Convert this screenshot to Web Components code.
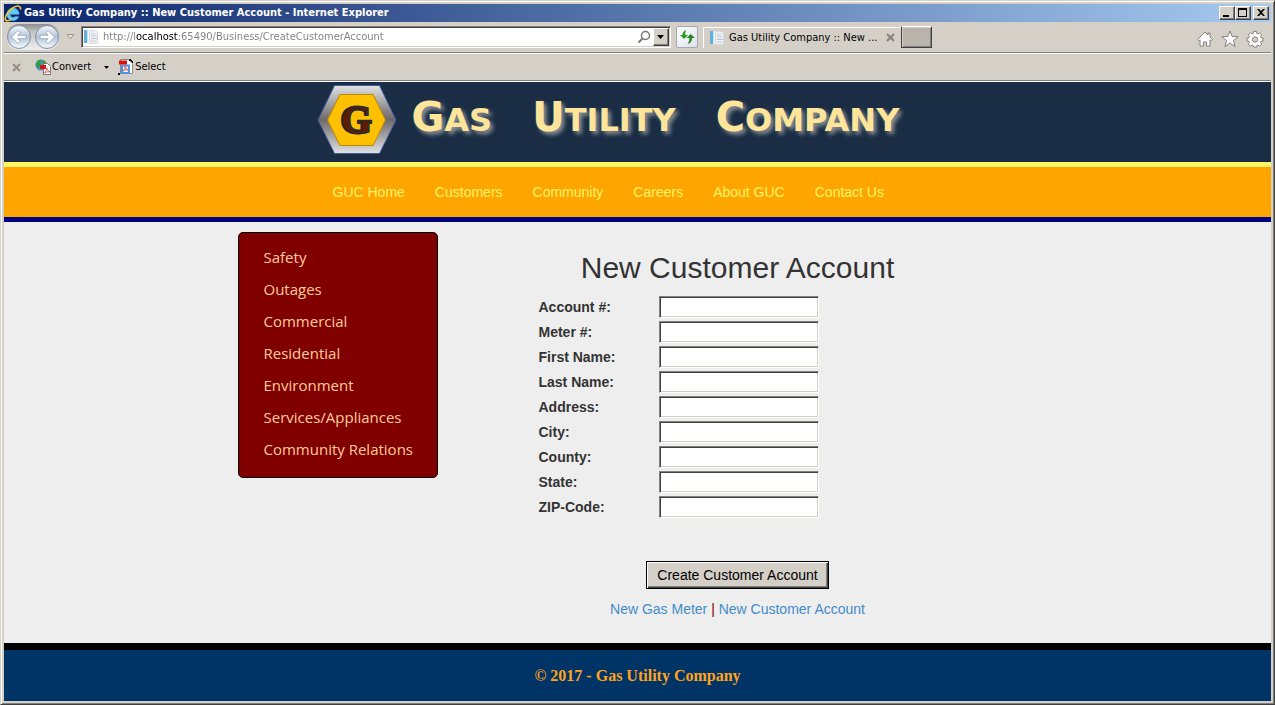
<!DOCTYPE html>
<html lang="en">
<head>
<meta charset="utf-8">
<title>Gas Utility Company :: New Customer Account</title>
<style>
    html, body {
        margin: 0;
        min-height: 100%;
    }
    body {
        font-family: "Liberation Sans", Arial, sans-serif;
        font-size: 14px;
        line-height: 20px;
        color: #333;
        --chrome: #d4d0c8;
        --chrome-font: "DejaVu Sans Condensed", "DejaVu Sans", Tahoma, sans-serif;
    }
</style>
</head>
<body>

<browser-window>
    <title-bar slot="chrome">Gas Utility Company :: New Customer Account - Internet Explorer</title-bar>
    <address-bar slot="chrome" url="http://localhost:65490/Business/CreateCustomerAccount" tab="Gas Utility Company :: New ..."></address-bar>
    <command-bar slot="chrome"></command-bar>

    <site-header company="Gas Utility Company"></site-header>
    <site-nav>
        <a href="#home">GUC Home</a>
        <a href="#customers">Customers</a>
        <a href="#community">Community</a>
        <a href="#careers">Careers</a>
        <a href="#about">About GUC</a>
        <a href="#contact">Contact Us</a>
    </site-nav>
    <site-content>
        <side-menu slot="side">
            <a href="#safety">Safety</a>
            <a href="#outages">Outages</a>
            <a href="#commercial">Commercial</a>
            <a href="#residential">Residential</a>
            <a href="#environment">Environment</a>
            <a href="#services">Services/Appliances</a>
            <a href="#relations">Community Relations</a>
        </side-menu>
        <account-form></account-form>
    </site-content>
    <site-footer>&copy; 2017 - Gas Utility Company</site-footer>
</browser-window>

<script>
(function () {
    // small helper, every component only differs in its markup
    function define(name, render) {
        customElements.define(name, class extends HTMLElement {
            connectedCallback() {
                if (this.shadowRoot) {
                    return;
                }
                this.attachShadow({ mode: 'open' });
                this.shadowRoot.innerHTML = render(this);
            }
        });
    }

    // the page icon is used in the address box and on the tab
    let pageIcon = `
        <svg class="page" width="16" height="16" viewBox="0 0 16 16" aria-hidden="true">
            <path d="M1 1h10v13H1z" fill="#f4f6f8"/>
            <path d="M1 1h3v13H1z" fill="#63b0dc"/>
            <path d="M4 1h1v13H4z" fill="#c4e0f0"/>
            <path d="M6.5 1.5h6l2 2v11h-8z" fill="#eef0f4" stroke="#d5dae2"/>
            <path d="M8 5h4M8 7h5M8 12h5" stroke="#c3cbd8"/>
            <path d="M8 9h6v1H8z" fill="#b5c0d0"/>
        </svg>`;

    define('browser-window', () => `
        <style>
            :host {
                display: flex;
                flex-direction: column;
                box-sizing: border-box;
                min-height: 100vh;
                padding: 3px;
                background: var(--chrome);
                border: 1px solid;
                border-color: #d4d0c8 #404040 #404040 #d4d0c8;
                box-shadow: inset 1px 1px #fff, inset -1px -1px #808080;
            }
            main {
                display: flex;
                flex-direction: column;
                flex: 1;
                background: #eee;
            }
        </style>
        <slot name="chrome"></slot>
        <main><slot></slot></main>`);

    define('title-bar', () => `
        <style>
            :host {
                display: flex;
                align-items: center;
                height: 18px;
                padding-right: 2px;
                background: linear-gradient(90deg, #0a246a, #a6caf0);
                color: #fff;
                font: bold 11px/18px var(--chrome-font);
            }
            span {
                flex: 1;
                padding-left: 2px;
                white-space: nowrap;
                overflow: hidden;
            }
            button {
                display: block;
                width: 16px;
                height: 14px;
                padding: 0;
                background: var(--chrome);
                border: 1px solid;
                border-color: #fff #404040 #404040 #fff;
                box-shadow: inset -1px -1px #808080;
            }
            button svg {
                display: block;
            }
            .close {
                margin-left: 2px;
            }
        </style>
        <svg width="18" height="18" viewBox="0 0 18 18" aria-hidden="true">
            <path d="M4.500 10.200H15A6 6.200 0 1 0 14.500 12.800H11A3 3 0 0 1 6 10.500M6.200 8h5.500a2.800 2.800 0 0 0-5.500 0" fill="#62c8f4" stroke="#62c8f4" stroke-width=".6"/>
            <path d="M16.500 5.500C17 1 12.500 1 8 4.500 3.500 8 .5 13 1.500 16c1 1.600 4 .5 6-.8" fill="none" stroke="#f7c52c" stroke-width="1.600"/>
        </svg>
        <span><slot></slot></span>
        <button type="button" aria-label="Minimize"><svg width="14" height="12"><path d="M3 8h6v2H3z"/></svg></button>
        <button type="button" aria-label="Maximize"><svg width="14" height="12"><path d="M2 1h9v9H2zM3 3v6h7V3z" fill-rule="evenodd"/></svg></button>
        <button type="button" class="close" aria-label="Close"><svg width="14" height="12"><path d="M3 2h2l2 2 2-2h2L8 5.500 11 9H9L7 7 5 9H3l3-3.500z"/></svg></button>`);

    define('address-bar', (el) => `
        <style>
            :host {
                display: flex;
                align-items: center;
                height: 30px;
                border-bottom: 1px solid #808080;
                box-shadow: 0 1px #fff;
                margin-bottom: 1px;
                font: 11px/16px var(--chrome-font);
                color: #000;
            }
            button {
                flex: none;
                padding: 0;
                border: 0;
                background: none;
            }
            button svg, .page {
                display: block;
                flex: none;
            }
            .travel {
                display: flex;
                gap: 4px;
                margin-left: 2px;
                padding: 0 1px;
                height: 26px;
                align-items: center;
                border-radius: 13px;
                background: linear-gradient(#8d8d8d, #c4c4c2 30%, #eee);
            }
            .travel button {
                width: 24px;
                height: 24px;
                border-radius: 50%;
            }
            .recent {
                margin: 0 6px;
            }
            .address {
                display: flex;
                align-items: center;
                box-sizing: border-box;
                flex: 0 1 590px;
                height: 22px;
                padding-left: 1px;
                background: #fff;
                border: 1px solid;
                border-color: #808080 #fff #fff #808080;
                box-shadow: inset 1px 1px #404040, inset -1px -1px #d4d0c8;
            }
            input {
                flex: 1;
                min-width: 0;
                margin-left: 4px;
                padding: 0;
                border: 0;
                outline: 0;
                font: inherit;
                color: #808080;
                /* host name stands out from the rest of the url */
                background: linear-gradient(90deg, #808080 33px, #000 33px 76px, #808080 76px);
                -webkit-background-clip: text;
                background-clip: text;
                -webkit-text-fill-color: transparent;
            }
            .drop {
                width: 16px;
                height: 18px;
                margin: 0 1px 0 2px;
                background: var(--chrome);
                border: 1px solid;
                border-color: #fff #404040 #404040 #fff;
                box-shadow: inset -1px -1px #808080;
            }
            .refresh {
                box-sizing: border-box;
                width: 22px;
                height: 22px;
                margin: 0 5px;
                border: 1px solid #a5a9b3;
                border-radius: 2px;
                background: linear-gradient(135deg, #fff, #dde1ea);
            }
            .tab {
                display: flex;
                align-items: center;
                box-sizing: border-box;
                width: 198px;
                height: 21px;
                padding: 0 6px 0 5px;
                border-left: 1px solid #fff;
                border-top: 1px solid #fff;
            }
            .tab span {
                flex: 1;
                margin-left: 4px;
                white-space: nowrap;
                overflow: hidden;
            }
            .new {
                box-sizing: border-box;
                width: 31px;
                height: 22px;
                background: #b8b4ab;
                border: 1px solid #404040;
                border-top-color: #fff;
                box-shadow: inset 1px 1px #d4d0c8, inset -1px -1px #808080;
            }
            .tools {
                display: flex;
                gap: 7px;
                margin: 3px 7px 0 auto;
            }
        </style>
        <div class="travel">
            <button type="button" aria-label="Back">
                <svg width="24" height="24" viewBox="0 0 24 24">
                    <defs><linearGradient id="g" x2="0" y2="1"><stop stop-color="#f4f8fc"/><stop offset=".5" stop-color="#b4c4d6"/><stop offset="1" stop-color="#f4fcff"/></linearGradient></defs>
                    <circle cx="12" cy="12" r="11.500" fill="url(#g)" stroke="#7e8ea2"/>
                    <path d="M4.500 12l6.500-6.500 2.300 2.300-2.500 2.500H19v3.400h-8.200l2.500 2.500-2.300 2.300z" fill="#fff" stroke="#8ea3ba" stroke-width=".8"/>
                </svg>
            </button>
            <button type="button" aria-label="Forward">
                <svg width="24" height="24" viewBox="0 0 24 24">
                    <circle cx="12" cy="12" r="11.500" fill="url(#g)" stroke="#7e8ea2"/>
                    <path d="M19.500 12l-6.500-6.500-2.300 2.300 2.500 2.500H5v3.400h8.200l-2.500 2.500 2.300 2.300z" fill="#fff" stroke="#8ea3ba" stroke-width=".8"/>
                </svg>
            </button>
        </div>
        <button type="button" class="recent" aria-label="Recent pages">
            <svg width="9" height="6"><path d="M1 .5h7L4.500 5z" fill="#e4e1dc" stroke="#9b9892"/></svg>
        </button>
        <div class="address">
            ${pageIcon}
            <input type="text" aria-label="Address" value="${el.getAttribute('url')}" spellcheck="false">
            <button type="button" aria-label="Search">
                <svg width="14" height="14"><circle cx="8.500" cy="5.500" r="4" fill="none" stroke="#777" stroke-width="1.500"/><path d="M5.500 8.500L1.500 12.500" stroke="#777" stroke-width="2"/></svg>
            </button>
            <button type="button" class="drop" aria-label="Show address list">
                <svg width="14" height="16"><path d="M3 6h7L6.500 10z"/></svg>
            </button>
        </div>
        <button type="button" class="refresh" aria-label="Refresh">
            <svg width="20" height="20">
                <path d="M3 8h2.500Q5.500 4 9 3Q8 5 8.300 8H11L7 12z" fill="#2f9b26"/>
                <path d="M9.500 11h3Q13 14 10.500 17Q15 16 15.200 11H18L13.700 7z" fill="#23851c"/>
            </svg>
        </button>
        <div class="tab">
            ${pageIcon}
            <span>${el.getAttribute('tab')}</span>
            <button type="button" aria-label="Close tab">
                <svg width="9" height="9"><path d="M1 1l7 7M8 1L1 8" stroke="#85827c" stroke-width="2"/></svg>
            </button>
        </div>
        <button type="button" class="new" aria-label="New tab"></button>
        <div class="tools">
            <button type="button" aria-label="Home">
                <svg width="18" height="18" viewBox="0 0 18 18"><path d="M9 2L1.500 9.500l1 1L4 10v6h3.500v-4h3v4H14v-6l1.500.5 1-1L14 7V3h-2v2z" fill="#fff" stroke="#85827c"/></svg>
            </button>
            <button type="button" aria-label="Favorites">
                <svg width="18" height="18" viewBox="0 0 18 18"><path d="M9 1l2.200 5.500 6 .2-4.700 3.800L14 16.500l-5-3.500-5 3.500 1.500-6L.8 6.700l6-.2z" fill="#fff" stroke="#85827c"/></svg>
            </button>
            <button type="button" aria-label="Tools">
                <svg width="18" height="18" viewBox="0 0 18 18">
                    <path d="M7.500 1.500h3l.3 2 1.200.5 1.700-1.200 2 2L14.500 6.500l.5 1.200 2 .3v3l-2 .3-.5 1.200 1.200 1.700-2 2-1.700-1.200-1.200.5-.3 1.500h-3l-.3-1.500L6 15l-1.700 1.200-2-2 1.200-1.700-.5-1.200-2-.3V8l2-.3.5-1.200-1.200-1.700 2-2L6 4l1.200-.5z" fill="#fff" stroke="#85827c"/>
                    <circle cx="9" cy="9.500" r="2.700" fill="#d4d0c8" stroke="#85827c"/>
                </svg>
            </button>
        </div>`);

    define('command-bar', () => `
        <style>
            :host {
                display: flex;
                align-items: center;
                height: 26px;
                padding-left: 8px;
                border-bottom: 1px solid #808080;
                box-shadow: 0 1px #fff;
                margin-bottom: 1px;
            }
            button {
                display: flex;
                align-items: center;
                height: 22px;
                padding: 0;
                border: 0;
                background: none;
                color: #000;
                font: 11px/16px var(--chrome-font);
            }
            .convert {
                margin-left: 14px;
            }
            .menu {
                margin: 0 9px 0 13px;
            }
        </style>
        <button type="button" aria-label="Close toolbar">
            <svg width="9" height="9"><path d="M1 1l7 7M8 1L1 8" stroke="#918e88" stroke-width="2"/></svg>
        </button>
        <button type="button" class="convert">
            <svg width="17" height="16" viewBox="0 0 17 16" aria-hidden="true">
                <circle cx="6" cy="6" r="5.500" fill="#4b90ce"/>
                <path d="M1 4Q3 0 7 1L5 4 6 6 3 9Q0 7 1 4M8 1l3 2-2 3-2-2z" fill="#2f9e3d"/>
                <path d="M8.500 4.500h4l3 3v8h-7z" fill="#fff" stroke="#777"/>
                <path d="M5 6h6v4H5z" fill="#e01010"/>
                <path d="M9.500 14q3-3 2.500-5 0 3 3.500 4-3-1-6 1" fill="none" stroke="#d66"/>
            </svg>
            Convert
        </button>
        <button type="button" class="menu" aria-label="Convert options">
            <svg width="5" height="3"><path d="M0 0h5L2.500 3z"/></svg>
        </button>
        <button type="button">
            <svg width="17" height="16" viewBox="0 0 17 16" aria-hidden="true">
                <path d="M2.500.5h8l4 4v10h-12z" fill="#fff" stroke="#888"/>
                <path d="M4 6.500h7V14H4z" fill="#eaf4ff" stroke="#4f93e0" stroke-width="2"/>
                <path d="M1 1.500h8v4H1z" fill="#e01010"/>
                <path d="M5 12q3-2 2-5 1 4 3.500 4-3-1-5.500 1" fill="none" stroke="#d66"/>
                <path d="M11 0h2v1h1v1h1v2h-1V3h-1V2h-2zM0 14h2v2H0z"/>
            </svg>
            Select
        </button>`);

    define('site-header', (el) => `
        <style>
            :host {
                display: block;
                height: 77px;
                padding-top: 3px;
                background: #1a2d45;
                border-bottom: 5px solid #fff566;
            }
            header {
                display: flex;
                gap: 15px;
                max-width: 642px;
                margin: 0 auto;
            }
            svg {
                flex: none;
            }
            h1 {
                display: flex;
                gap: 40px;
                margin: 0;
                color: #ffe599;
                font: bold 32px/64px "DejaVu Sans", Verdana, sans-serif;
                text-transform: uppercase;
                text-shadow: 3px 3px 4px #8f9496;
            }
            span {
                display: block;
            }
            span::first-letter {
                font-size: 40px;
            }
        </style>
        <header>
            <svg width="80" height="70" viewBox="0 0 80 70" role="img" aria-label="${el.getAttribute('company')} logo">
                <defs>
                    <linearGradient id="steel" x2="0" y2="1">
                        <stop stop-color="#e2e1e3"/>
                        <stop offset=".5" stop-color="#6d6869"/>
                        <stop offset="1" stop-color="#e2e1e3"/>
                    </linearGradient>
                </defs>
                <path d="M17.500.5h45L79 35 62.500 68.500h-45L1 35z" fill="url(#steel)" stroke="#3b5c9d"/>
                <path d="M23 9.500h33L68.500 35 56 60.500H23L10.500 35z" fill="#ffc000" stroke="#b58a05"/>
                <text x="39" y="48" text-anchor="middle" font-family="Liberation Serif, serif" font-weight="bold" font-size="40" fill="#5b1c00" stroke="#1a2d45" stroke-width="3" paint-order="stroke">G</text>
            </svg>
            <h1>${el.getAttribute('company').split(' ').map((word) => `<span>${word}</span>`).join(' ')}</h1>
        </header>`);

    define('site-nav', () => `
        <style>
            :host {
                display: block;
                background: #ffa500;
                border-bottom: 5px solid #000080;
            }
            nav {
                display: flex;
                max-width: 640px;
                margin: 0 auto;
            }
            ::slotted(a) {
                padding: 15px;
                color: #fff566;
                text-decoration: none;
                white-space: nowrap;
            }
        </style>
        <nav><slot></slot></nav>`);

    define('site-content', () => `
        <style>
            :host {
                display: flex;
                flex: 1;
                justify-content: center;
                align-items: flex-start;
                padding-top: 10px;
            }
            .main {
                flex: 0 1 600px;
            }
        </style>
        <slot name="side"></slot>
        <div class="main"><slot></slot></div>`);

    define('side-menu', () => `
        <style>
            :host {
                display: block;
                box-sizing: border-box;
                flex: 0 0 200px;
                padding: 8px 0 12px;
                background: #800000;
                border: 1px solid #000;
                border-radius: 5px;
            }
            ::slotted(a) {
                display: block;
                padding-left: 25px;
                color: #ffcc99;
                font: 15px/32px "Open Sans", "Segoe UI", sans-serif;
                text-decoration: none;
                white-space: nowrap;
            }
        </style>
        <nav><slot></slot></nav>`);

    define('form-field', (el) => `
        <style>
            :host {
                display: flex;
                align-items: center;
                height: 25px;
            }
            label {
                width: 120px;
                font-weight: bold;
            }
            input {
                box-sizing: border-box;
                width: 160px;
                height: 22px;
                padding: 1px 2px;
                background: #fff;
                border: 1px solid;
                border-color: #808080 #fff #fff #808080;
                box-shadow: inset 1px 1px #404040, inset -1px -1px #d4d0c8;
                outline: 0;
                font: inherit;
            }
        </style>
        <label for="field">${el.getAttribute('label')}</label>
        <input type="text" id="field" name="${el.getAttribute('name')}">`);

    define('account-form', () => `
        <style>
            h2 {
                margin: 19px 0 10px;
                font-size: 30px;
                line-height: 33px;
                font-weight: normal;
                text-align: center;
            }
            .fields {
                max-width: 398px;
                margin: 0 auto 42px;
            }
            p {
                text-align: center;
            }
            button {
                display: block;
                height: 28px;
                margin: 0 auto;
                padding: 0 10px;
                background: var(--chrome);
                border: 1px solid #000;
                border-radius: 0;
                box-shadow: inset 1px 1px #fff, inset -1px -1px #404040, inset -2px -2px #808080;
                color: #000;
                font: inherit;
            }
            p {
                margin: 10px 0;
                color: #800000;
            }
            a {
                color: #428bca;
                text-decoration: none;
            }
        </style>
        <h2>New Customer Account</h2>
        <form onsubmit="return false">
            <div class="fields">
                <form-field name="AccountNumber" label="Account #:"></form-field>
                <form-field name="MeterNumber" label="Meter #:"></form-field>
                <form-field name="FirstName" label="First Name:"></form-field>
                <form-field name="LastName" label="Last Name:"></form-field>
                <form-field name="Address" label="Address:"></form-field>
                <form-field name="City" label="City:"></form-field>
                <form-field name="County" label="County:"></form-field>
                <form-field name="State" label="State:"></form-field>
                <form-field name="ZIPCode" label="ZIP-Code:"></form-field>
            </div>
            <button type="submit">Create Customer Account</button>
        </form>
        <p><a href="#meter">New Gas Meter</a> | <a href="#account">New Customer Account</a></p>`);

    define('site-footer', () => `
        <style>
            :host {
                display: block;
                background: #003366;
                border-top: 7px solid #000;
            }
            footer {
                color: #ffa41c;
                font: bold 16px/51px "Liberation Serif", "Times New Roman", serif;
                text-align: center;
            }
        </style>
        <footer><slot></slot></footer>`);
})();
</script>
</body>
</html>
